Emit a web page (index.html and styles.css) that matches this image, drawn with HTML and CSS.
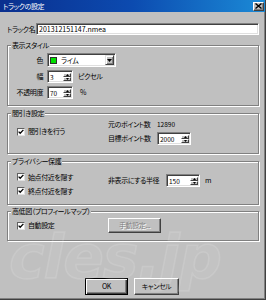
FILE: index.html
```html
<!DOCTYPE html>
<html lang="ja">
<head>
<meta charset="utf-8">
<title>トラックの設定</title>
<link rel="stylesheet" href="styles.css">
</head>
<body>
<div class="window">
  <div class="titlebar">
    <span class="title">トラックの設定</span>
    <span class="close"><svg width="7" height="6" viewBox="0 0 7 6"><path d="M0.5 0.5 L6.5 5.5 M6.5 0.5 L0.5 5.5" stroke="#000" stroke-width="1.4"/></svg></span>
  </div>
  <div class="content">
    <div class="name-row">
      <span class="name-label">トラック名</span>
      <div class="field name-field">201312151147.nmea</div>
    </div>

    <div class="group g1">
      <div class="legend">表示スタイル</div>
      <div class="style-grid">
        <span class="rlbl">色</span>
        <div class="field combo">
          <span class="swatch"></span>
          <span class="combo-text">ライム</span>
          <span class="drop"><svg width="5" height="3" viewBox="0 0 5 3"><path d="M0 0 H5 L2.5 3 Z" fill="#000"/></svg></span>
        </div>
        <span class="rlbl">幅</span>
        <div class="inline">
          <div class="field spin w26"><span class="spin-val">3</span><span class="spinbtns"><span class="sb"><svg width="3" height="2" viewBox="0 0 3 2"><path d="M1.5 0 L3 2 H0 Z" fill="#000"/></svg></span><span class="sb"><svg width="3" height="2" viewBox="0 0 3 2"><path d="M0 0 H3 L1.5 2 Z" fill="#000"/></svg></span></span></div>
          <span class="unit u-px">ピクセル</span>
        </div>
        <span class="rlbl">不透明度</span>
        <div class="inline">
          <div class="field spin w26"><span class="spin-val">70</span><span class="spinbtns"><span class="sb"><svg width="3" height="2" viewBox="0 0 3 2"><path d="M1.5 0 L3 2 H0 Z" fill="#000"/></svg></span><span class="sb"><svg width="3" height="2" viewBox="0 0 3 2"><path d="M0 0 H3 L1.5 2 Z" fill="#000"/></svg></span></span></div>
          <span class="unit u-pct">%</span>
        </div>
      </div>
    </div>

    <div class="group g2">
      <div class="legend">間引き設定</div>
      <div class="g2-row">
        <div class="left-col">
          <label class="check"><span class="cb"><svg width="6" height="6" viewBox="0 0 6 6"><path d="M0.6 2.6 L2.2 4.3 L5.4 0.9" fill="none" stroke="#000" stroke-width="1.3"/></svg></span><span>間引きを行う</span></label>
        </div>
        <div class="right-grid">
          <span class="r1">元のポイント数</span><span class="r1 num">12890</span>
          <span class="r2">目標ポイント数</span>
          <div class="field spin w34"><span class="spin-val">2000</span><span class="spinbtns"><span class="sb"><svg width="3" height="2" viewBox="0 0 3 2"><path d="M1.5 0 L3 2 H0 Z" fill="#000"/></svg></span><span class="sb"><svg width="3" height="2" viewBox="0 0 3 2"><path d="M0 0 H3 L1.5 2 Z" fill="#000"/></svg></span></span></div>
        </div>
      </div>
    </div>

    <div class="group g3">
      <div class="legend">プライバシー保護</div>
      <div class="g3-row">
        <div class="left-col checks">
          <label class="check"><span class="cb"><svg width="6" height="6" viewBox="0 0 6 6"><path d="M0.6 2.6 L2.2 4.3 L5.4 0.9" fill="none" stroke="#000" stroke-width="1.3"/></svg></span><span>始点付近を隠す</span></label>
          <label class="check"><span class="cb"><svg width="6" height="6" viewBox="0 0 6 6"><path d="M0.6 2.6 L2.2 4.3 L5.4 0.9" fill="none" stroke="#000" stroke-width="1.3"/></svg></span><span>終点付近を隠す</span></label>
        </div>
        <div class="radius">
          <span class="radius-label">非表示にする半径</span>
          <div class="field spin w34"><span class="spin-val">150</span><span class="spinbtns"><span class="sb"><svg width="3" height="2" viewBox="0 0 3 2"><path d="M1.5 0 L3 2 H0 Z" fill="#000"/></svg></span><span class="sb"><svg width="3" height="2" viewBox="0 0 3 2"><path d="M0 0 H3 L1.5 2 Z" fill="#000"/></svg></span></span></div>
          <span class="unit u-m">m</span>
        </div>
      </div>
    </div>

    <div class="group g4">
      <div class="legend">高低図（プロフィールマップ）</div>
      <div class="g4-row">
        <div class="left-col">
          <label class="check"><span class="cb"><svg width="6" height="6" viewBox="0 0 6 6"><path d="M0.6 2.6 L2.2 4.3 L5.4 0.9" fill="none" stroke="#000" stroke-width="1.3"/></svg></span><span>自動設定</span></label>
        </div>
        <div class="btn disabled manual">手動設定...</div>
      </div>
    </div>
  </div>
  <div class="buttons">
    <div class="btn default ok">OK</div>
    <div class="btn cancel">キャンセル</div>
  </div>
  <div class="watermark">cles.jp</div>
</div>
</body>
</html>
```

FILE: styles.css
```css
* { box-sizing: border-box; }
html, body { margin: 0; padding: 0; }
body {
  width: 266px;
  height: 300px;
  overflow: hidden;
  background: #c0c0c0;
  font-family: "Noto Sans CJK JP", "Noto Sans", sans-serif;
  font-size: 7px;
  line-height: 9px;
  letter-spacing: -0.4px;
  font-feature-settings: "palt";
  white-space: nowrap;
  color: #000;
}
.window {
  position: relative;
  width: 266px;
  height: 300px;
  display: flex;
  flex-direction: column;
  background: #c0c0c0;
  border-right: 1px solid #404040;
  border-bottom: 1px solid #404040;
  box-shadow: inset -1px -1px 0 #808080;
}
.titlebar {
  height: 12px;
  flex: none;
  display: flex;
  align-items: center;
  padding: 0 1px 0 3px;
  background: linear-gradient(to right, #0a2f8e 0%, #0c4bb0 50%, #1b8ad6 100%);
}
.title { flex: 1; color: #fff; }
.close {
  width: 11px;
  height: 9px;
  display: flex;
  align-items: center;
  justify-content: center;
  background: #c0c0c0;
  border: 1px solid;
  border-color: #fff #404040 #404040 #fff;
  box-shadow: inset -1px -1px 0 #808080;
}
.close svg { display: block; }
.content {
  flex: 1;
  display: flex;
  flex-direction: column;
  padding: 11px 6px 0 7px;
}
.field {
  background: #fff;
  border: 1px solid;
  border-color: #808080 #fff #fff #808080;
  box-shadow: inset 1px 1px 0 #404040, inset -1px -1px 0 #dfdfdf;
}
.name-row { display: flex; align-items: center; height: 12px; }
.name-label { width: 29px; flex: none; }
.name-field { flex: 1; height: 12px; padding-left: 2px; line-height: 10px; letter-spacing: 0; }

.group {
  border: 1px solid #808080;
  box-shadow: inset 1px 1px 0 #fff, 1px 1px 0 #fff;
  display: flex;
  flex-direction: column;
}
.legend {
  align-self: flex-start;
  margin-top: -5px;
  margin-left: 3px;
  padding: 0 1px;
  height: 9px;
  background: #c0c0c0;
}
.g1 { margin-top: 10px; padding-bottom: 6px; }
.style-grid {
  margin-top: 3px;
  display: grid;
  grid-template-columns: 35px auto;
  grid-template-rows: 14px 13px 13px;
  column-gap: 4px;
  row-gap: 3px;
  align-items: center;
  justify-items: start;
}
.rlbl { justify-self: end; }
.combo {
  width: 69px;
  height: 14px;
  display: flex;
  align-items: center;
  padding: 0 1px 0 2px;
}
.swatch {
  width: 7px;
  height: 7px;
  background: #00e000;
  border: 1px solid #303030;
}
.combo-text { margin-left: 4px; }
.drop {
  margin-left: auto;
  width: 9px;
  height: 10px;
  display: flex;
  align-items: center;
  justify-content: center;
  background: #c0c0c0;
  border: 1px solid;
  border-color: #dfdfdf #404040 #404040 #dfdfdf;
  box-shadow: inset 1px 1px 0 #fff, inset -1px -1px 0 #808080;
}
.drop svg, .sb svg { display: block; }
.inline { display: flex; align-items: center; }
.spin {
  height: 13px;
  display: flex;
  align-items: stretch;
  padding: 2px 1px 1px 2px;
}
.w26 { width: 26px; }
.w34 { width: 34px; }
.spin-val { flex: 1; line-height: 9px; font-size: 6.5px; letter-spacing: 0; }
.num { font-size: 6.5px; letter-spacing: 0; }
.spinbtns { width: 8px; display: flex; flex-direction: column; }
.sb {
  flex: 1;
  display: flex;
  align-items: center;
  justify-content: center;
  background: #c0c0c0;
  border: 1px solid;
  border-color: #fff #404040 #404040 #fff;
}
.u-px { margin-left: 5px; }
.u-pct { margin-left: 7px; }
.u-m { margin-left: 5px; }

.g2 { margin-top: 7px; padding-bottom: 8px; }
.g2-row { display: flex; align-items: center; }
.left-col { width: 100px; flex: none; padding-left: 9px; }
.check { display: flex; align-items: center; height: 12px; }
.cb {
  width: 8px;
  height: 8px;
  margin-right: 3px;
  background: #fff;
  border: 1px solid;
  border-color: #606060 #e0e0e0 #e0e0e0 #606060;
  display: flex;
  align-items: center;
  justify-content: center;
}
.cb svg { display: block; }
.right-grid {
  display: grid;
  grid-template-columns: 49px auto;
  grid-template-rows: 12px 13px;
  row-gap: 2px;
  align-items: center;
  justify-items: start;
}

.g3 { margin-top: 7px; padding-bottom: 7px; }
.g3-row { display: flex; align-items: flex-start; }
.checks { margin-top: 5px; display: flex; flex-direction: column; row-gap: 2px; }
.radius { margin-top: 8px; display: flex; align-items: center; height: 13px; }
.radius-label { width: 58px; flex: none; }

.g4 { margin-top: 6px; padding-bottom: 7px; }
.g4-row { margin-top: 2px; display: flex; align-items: center; }

.btn {
  height: 15px;
  display: flex;
  align-items: center;
  justify-content: center;
  background: #c0c0c0;
  border: 1px solid;
  border-color: #fff #404040 #404040 #fff;
  box-shadow: inset -1px -1px 0 #808080;
}
.manual { width: 53px; }
.disabled { color: #808080; text-shadow: 1px 1px 0 #fff; }
.buttons {
  flex: none;
  display: flex;
  justify-content: center;
  column-gap: 6px;
  padding: 0 1px 4px 0;
}
.buttons .btn { height: 17px; }
.ok { width: 43px; }
.cancel { width: 45px; }
.default {
  border-color: #000;
  box-shadow: inset 1px 1px 0 #fff, inset -1px -1px 0 #404040, inset -2px -2px 0 #808080;
}
.watermark {
  position: absolute;
  left: 9px;
  top: 222px;
  font-family: "DejaVu Sans", sans-serif;
  font-weight: bold;
  font-style: italic;
  font-size: 60px;
  line-height: 70px;
  letter-spacing: -1px;
  color: rgba(255, 255, 255, 0.05);
  -webkit-text-stroke: 1.5px rgba(255, 255, 255, 0.13);
  pointer-events: none;
}
```
